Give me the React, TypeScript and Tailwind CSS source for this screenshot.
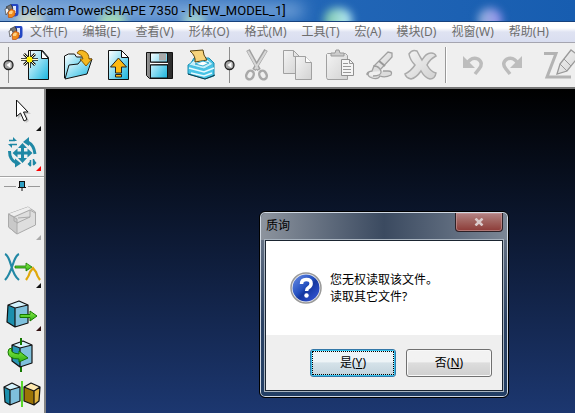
import { useState } from "react";
import type { ReactNode } from "react";

const menus = [
  { name: "文件", hotkey: "F" },
  { name: "编辑", hotkey: "E" },
  { name: "查看", hotkey: "V" },
  { name: "形体", hotkey: "O" },
  { name: "格式", hotkey: "M" },
  { name: "工具", hotkey: "T" },
  { name: "宏", hotkey: "A" },
  { name: "模块", hotkey: "D" },
  { name: "视窗", hotkey: "W" },
  { name: "帮助", hotkey: "H" },
];

// gradients shared by all the icons
function IconDefs() {
  return (
    <svg className="absolute size-0" aria-hidden="true">
      <defs>
        <linearGradient id="cyan" x1="0" y1="0" x2="1" y2="1">
          <stop offset="0" stopColor="#ffffff" />
          <stop offset="0.5" stopColor="#8adcf2" />
          <stop offset="1" stopColor="#18b4de" />
        </linearGradient>
        <linearGradient id="grey" x1="0" y1="0" x2="1" y2="1">
          <stop offset="0" stopColor="#f4f4f4" />
          <stop offset="1" stopColor="#d2d2d2" />
        </linearGradient>
        <linearGradient id="steel" x1="0" y1="0" x2="1" y2="0">
          <stop offset="0" stopColor="#9a9a9a" />
          <stop offset="0.4" stopColor="#4c4c4c" />
          <stop offset="1" stopColor="#2a2a2a" />
        </linearGradient>
        <linearGradient id="green" x1="0" y1="0" x2="0" y2="1">
          <stop offset="0" stopColor="#8af04a" />
          <stop offset="1" stopColor="#2fae12" />
        </linearGradient>
        <linearGradient id="query" x1="0" y1="0" x2="1" y2="1">
          <stop offset="0" stopColor="#6d90e6" />
          <stop offset="0.45" stopColor="#2450c0" />
          <stop offset="0.55" stopColor="#1437a0" />
          <stop offset="1" stopColor="#3c5ce0" />
        </linearGradient>
      </defs>
    </svg>
  );
}

function Logo() {
  return (
    <svg viewBox="0 0 15 15" className="size-[15px] shrink-0" aria-hidden="true">
      <path d="M7 1h6q1.500 0 1.500 2v7q0 3-3 3.500H7z" fill="#2447c4" />
      <path d="M9 3h3v7H9z" fill="#dfe8fb" />
      <path d="M2 4l5-2.500 2 4-3 2z" fill="#777" stroke="#222" strokeWidth=".6" />
      <path d="M1 6l3-1 1 3-3 4z" fill="#f5f5f5" stroke="#444" strokeWidth=".7" />
      <path d="M4 9l3.500-3L11 8v4l-3 2.500H4.500z" fill="#f08a1c" stroke="#bb4a0c" strokeWidth=".7" />
      <path d="M5 9l2-1.500 2 1-1 2.500H5z" fill="#ffd084" />
    </svg>
  );
}

function Handle() {
  return (
    <div className="flex w-4 shrink-0 items-center justify-center">
      <svg viewBox="0 0 16 36" className="h-9 w-4" aria-hidden="true">
        <path d="M8.500 0v36" stroke="#8e8e8e" />
        <circle cx="8.500" cy="18" r="4.500" fill="#a5a5a5" stroke="#222" strokeWidth="1.300" />
        <path d="M10.500 15v6l-4-3z" fill="#fff" />
      </svg>
    </div>
  );
}

function ToolButton({ label, disabled, children }: { label: string; disabled?: boolean; children: ReactNode }) {
  return (
    <button aria-label={label} disabled={disabled} className="flex w-[41px] shrink-0 items-center justify-center">
      <svg viewBox="0 0 35 35" className="size-[35px] overflow-visible" fill="none">
        {children}
      </svg>
    </button>
  );
}

function SideButton({ label, corner, disabled, children }: { label: string; corner?: string; disabled?: boolean; children: ReactNode }) {
  return (
    <button aria-label={label} disabled={disabled} className="flex h-10 w-full shrink-0 items-center">
      <svg viewBox="0 0 44 40" className="h-10 w-11 shrink-0 overflow-visible" fill="none">
        {children}
        {corner && <path d="M41 33v5h-5z" fill={corner} />}
      </svg>
    </button>
  );
}

function TitleBar() {
  return (
    <header className="relative flex h-[21px] items-center overflow-hidden bg-linear-to-r from-[#6696cf] via-[#2367b7] via-50% to-[#175db0] px-1">
      <div className="absolute inset-y-1 -left-4 w-[320px] rounded-full bg-[#a9caef]/70 blur-sm" />
      <div className="absolute top-3 left-4 h-4 w-7 rounded-full bg-[#e5e5c5]/80 blur-xs" />
      <div className="absolute top-3 left-[98px] h-5 w-7 rounded-full bg-[#b0e8b0]/80 blur-xs" />
      <div className="absolute top-3 left-[182px] h-5 w-6 rounded-full bg-[#b8e6ce]/70 blur-xs" />
      <div className="absolute top-2 left-[324px] h-6 w-7 rounded-full bg-linear-to-r from-[#79c4a6] to-[#bdeeff] blur-xs" />
      <div className="absolute top-2 left-[478px] h-6 w-6 rounded-full bg-linear-to-r from-[#8fb3d8] to-[#9b91f0] blur-xs" />
      <div className="relative flex items-center gap-0.5">
        <Logo />
        <h1 className="font-[Roboto,'Noto_Sans',sans-serif] text-[13px] leading-5 whitespace-nowrap text-black">
          Delcam PowerSHAPE 7350 - [NEW_MODEL_1]
        </h1>
      </div>
    </header>
  );
}

function MenuBar() {
  return (
    <nav className="flex h-[21px] items-center gap-[15px] overflow-hidden border-t border-[#16417c] bg-linear-to-b from-white from-30% via-[#dfe3f2] via-50% to-[#d9def0] pl-2 text-xs text-[#6d6d6d]">
      <div className="-mr-2">
        <Logo />
      </div>
      {menus.map((menu) => (
        <button key={menu.hotkey} className="whitespace-nowrap">
          {menu.name}({menu.hotkey})
        </button>
      ))}
    </nav>
  );
}

function Toolbar() {
  return (
    <div className="flex h-[47px] overflow-hidden border-t border-b-2 border-t-[#a5a5b0] border-b-[#777] bg-[#efefef]">
      <Handle />
      <ToolButton label="新建">
        <path d="M9.500 2.500h14l6 7v22h-20z" fill="url(#cyan)" stroke="#111" />
        <path d="M22.500 2.500v8h7z" fill="#fff" stroke="#111" />
        <path d="M10.500 3v17M2 11.500h17M5 6l11 11M16 6L5 17" stroke="#111" strokeWidth="2.600" />
        <path d="M10.500 3v17M2 11.500h17M5 6l11 11M16 6L5 17" stroke="#fffbd0" />
        <circle cx="10.500" cy="11.500" r="3" fill="#fff200" />
      </ToolButton>
      <ToolButton label="打开">
        <path d="M4.500 30V8l4-2h6l2 3h9v7" fill="url(#cyan)" stroke="#111" />
        <path d="M5 31l4-14 9-1 4-5h10l-5 15z" fill="url(#cyan)" stroke="#111" />
        <path d="M17 5q2-4 7-2 5 2 5 8h3l-6 7-6-7h3q0-4-6-6z" fill="#f5b820" stroke="#8c5b00" />
      </ToolButton>
      <ToolButton label="导入">
        <path d="M7.500 2.500h13l7 7v22h-20z" fill="url(#cyan)" stroke="#111" />
        <path d="M20.500 2.500v7h7z" fill="#fff" stroke="#111" />
        <path d="M17.500 10l8 9h-5v6h-6v-6h-5zM14.500 26.500h6v2.500h-6z" fill="#fdb913" stroke="#222" />
      </ToolButton>
      <ToolButton label="保存">
        <path d="M4.500 4.500h26v26h-23l-3-3z" fill="url(#steel)" stroke="#111" />
        <path d="M8.500 5h17v9h-17zM8.500 17h17v13h-17z" fill="url(#cyan)" stroke="#111" />
        <path d="M17 5.500h7v7h-7z" fill="#aaa" />
        <path d="M8 15.500h18" stroke="#fff" />
      </ToolButton>
      <ToolButton label="打印">
        <path d="M8 15l3-5 15 0 5 5v13l-9 3-17-5V17z" fill="#48c4e6" stroke="#1b8db0" />
        <path d="M6 17l5-5 13-1 6 5-9 5z" fill="#c6f0fb" stroke="#4abbdc" />
        <path d="M7 3l13-1q0 5 4 10l-12 2q1-6-5-11z" fill="#f6d37c" stroke="#57410f" />
        <path d="M12 16l8-3 6 2-6 3z" fill="#fff" stroke="#34aed2" />
        <path d="M6 20l15 4 10-4M8 25l13 3 8-3" stroke="#e7faff" strokeWidth="1.500" />
        <path d="M5 26l17 5 10-4" stroke="#123d4a" />
      </ToolButton>
      <Handle />
      <ToolButton label="剪切" disabled>
        <path d="M8 2l11 20M26 2L14 22" stroke="#a0a0a0" strokeWidth="4" />
        <path d="M8 3l10 18M26 3L15 21" stroke="#d6d6d6" strokeWidth="2" />
        <ellipse cx="10" cy="27" rx="3.500" ry="4.500" stroke="#a9a9a9" strokeWidth="2.500" transform="rotate(30 10 27)" />
        <ellipse cx="23" cy="27" rx="3.500" ry="4.500" stroke="#a9a9a9" strokeWidth="2.500" transform="rotate(-30 23 27)" />
      </ToolButton>
      <ToolButton label="复制" disabled>
        <path d="M2.500 2.500h10l6 6v17h-16z" fill="url(#grey)" stroke="#a0a0a0" />
        <path d="M12.500 2.500v6h6" stroke="#a0a0a0" />
        <path d="M14.500 8.500h10l6 6v17h-16z" fill="url(#grey)" stroke="#a0a0a0" />
        <path d="M24.500 8.500v6h6" fill="#fff" stroke="#a0a0a0" />
      </ToolButton>
      <ToolButton label="粘贴" disabled>
        <path d="M5.500 5.500h18l2 2v24h-20l-1-2v-23z" fill="url(#grey)" stroke="#a0a0a0" />
        <path d="M9 8V5h4l1-3h3l1 3h4v3z" fill="#ccc" stroke="#999" />
        <path d="M19.500 11.500h8l4 4v12h-12z" fill="#f5f5f5" stroke="#909090" />
        <path d="M27.500 11.500v4h4M21 15.500h5M21 18.500h8M21 21.500h8M21 24.500h8" stroke="#999" />
      </ToolButton>
      <ToolButton label="格式刷" disabled>
        <path d="M11 18L25 4l4 1v4L17 22z" fill="url(#grey)" stroke="#a0a0a0" strokeWidth="1.300" />
        <path d="M16 13l6 5" stroke="#999" strokeWidth="2" />
        <path d="M4 27q-1-3 5-4l2-5q5 0 7 5 1 5-8 5M6 24q-3 4 3 6 6 2 8-2 5 2 11-1 2-4-3-4h-5" fill="#ddd" stroke="#a0a0a0" strokeWidth="1.300" />
      </ToolButton>
      <ToolButton label="删除" disabled>
        <path d="M5 6q3-5 8-3 2 4 5 9 4-7 9-7 4 0 5 3-6 3-9 9 4 7 9 8-1 6-6 6-5-1-9-8-5 7-10 8-5-1-6-5 6-3 10-9-5-5-6-11z" fill="url(#grey)" stroke="#aaa" strokeWidth="1.500" />
      </ToolButton>
      <div className="w-[10px] shrink-0 py-1 pl-[3px]">
        <div className="h-full w-0.5 border-r border-white bg-[#999]" />
      </div>
      <ToolButton label="撤消" disabled>
        <path d="M11 17q5-9 12-6 6 4 1 10l-4 5" stroke="#bcbcbc" strokeWidth="3.500" />
        <path d="M8 8v12h12z" fill="#bdbdbd" />
      </ToolButton>
      <ToolButton label="重做" disabled>
        <path d="M23 17q-5-9-12-6-6 4-1 10l4 5" stroke="#bcbcbc" strokeWidth="3.500" />
        <path d="M26 8v12H14z" fill="#bdbdbd" />
      </ToolButton>
      <ToolButton label="草图" disabled>
        <path d="M7 5.500h12L10 29h24" stroke="#b3b3b3" strokeWidth="3" />
        <path d="M23 16l11-14 8 6-12 15-10 3z" fill="url(#grey)" stroke="#999" strokeWidth="1.300" />
        <path d="M23 16l7 7M27 11l7 7" stroke="#999" />
      </ToolButton>
    </div>
  );
}

function SideBar() {
  return (
    <aside className="flex w-[46px] shrink-0 flex-col border-r-2 border-[#858585] bg-[#efefef] pt-1">
      <SideButton label="选择" corner="#111">
        <path d="M18 8v18l4-4 4 8 3-2-3-7h5z" fill="#999" opacity=".4" />
        <path d="M16.500 7v16.500l4-3.500 3.500 8 3-1.500-3.500-7.500h4.500z" fill="#fff" stroke="#111" />
      </SideButton>
      <SideButton label="移动视图" corner="#f00">
        <path d="M22.500 10l4.500 5h-3v3.500h3.500v-3l5 4.500-5 4.500v-3H24V25h3l-4.500 5-4.500-5h3v-3.500h-3.500v3l-5-4.500 5-4.500v3H21V15h-3z" fill="#1f88a5" />
        <path d="M9.500 18q0 9 7 12" stroke="#1f88a5" strokeWidth="3" />
        <path d="M15 25.500v9l6-4z" fill="#1f88a5" />
        <path d="M35 21q-1-9-7-12" stroke="#1f88a5" strokeWidth="3" />
        <path d="M29 4v9l-6-4z" fill="#1f88a5" />
        <path d="M9 7.500h6M10 11.500h7M30.500 27v6M33.500 26v6" stroke="#1f88a5" strokeWidth="1.500" />
        <path d="M13 4l4 4h-4zM12 15l-4-4h4zM30.500 34v-6l-3 3zM33.500 26v7l3-3z" fill="#1f88a5" />
      </SideButton>
      <div className="mt-[3px] border-t border-b border-t-[#a5a5a5] border-b-white" />
      <div className="mb-2 flex h-4 items-center justify-center gap-0.5 px-1">
        <div className="h-px flex-1 bg-[#999]" />
        <svg viewBox="0 0 8 10" className="h-2.5 w-2" aria-hidden="true">
          <path d="M2 1h4v5H2z" fill="#2fa0c4" />
          <path d="M1 .5h6M1.500 1v5M6.500 1v5M0 6.500h8M4 7v3" stroke="#111" fill="none" />
        </svg>
        <div className="h-px flex-1 bg-[#999]" />
      </div>
      <SideButton label="实体" corner="#aaa" disabled>
        <path d="M8.500 12L28 5l7.500 5v13L17 32l-8.500-7z" fill="#dedede" stroke="#aaa" />
        <path d="M8.500 12L17 17v15l-8.500-7z" fill="#c9c9c9" stroke="#aaa" />
        <path d="M8.500 12L28 5l3 2-17 7z" fill="#eee" />
        <path d="M8.500 12l5.500 3 16-7v7l-13 6M14 15v4l4 2M18 16l12-1M30 8l5 3" stroke="#aaa" />
      </SideButton>
      <div className="pt-2">
        <SideButton label="曲线编辑" corner="#111">
          <path d="M5 4q3 1 6 11 3 11 8 15M19 4q-3 1-6 10Q9 26 5 30" stroke="#2288a5" strokeWidth="2.200" />
          <path d="M15 16h11v-3l6 4-6 4v-3H15z" fill="url(#green)" stroke="#147800" strokeWidth=".8" />
          <path d="M26 30q3-4 4-8l3-4 3 4q1 4 4 8" stroke="#e0a80b" strokeWidth="2.200" />
        </SideButton>
      </div>
      <div className="pt-[3px]">
        <SideButton label="拉伸" corner="#311">
          <path d="M8 12l7 3v19l-8-5z" fill="#1b8fad" />
          <path d="M15 15l13-3v18l-13 4z" fill="#7fc0dc" />
          <path d="M8 12l11-4 9 4-13 3z" fill="#d4f2fc" />
          <path d="M8 12l11-4 9 4v18l-13 4-8-5zM8 12l7 3 13-3M15 15v19" stroke="#111" strokeWidth="1.200" strokeLinejoin="round" />
          <path d="M20 21.500h10V18l7 5-7 5v-3.500H20z" fill="url(#green)" stroke="#147800" />
        </SideButton>
      </div>
      <SideButton label="旋转">
        <path d="M21 5v34" stroke="#147800" strokeWidth="2" />
        <path d="M12 12l8 3v19l-8-6z" fill="#2a96b4" />
        <path d="M20 15l12-3v18l-12 4z" fill="#7fc0dc" />
        <path d="M12 12l11-4 9 4-12 3z" fill="#d4f2fc" />
        <path d="M12 12l11-4 9 4v18l-12 4-8-6zM12 12l8 3 12-3M20 15v19" stroke="#111" strokeWidth="1.200" strokeLinejoin="round" />
        <path d="M21 5v7" stroke="#147800" strokeWidth="2" />
        <path d="M12 15q-3 5 7 6v-3l9 7-9 4v-3q-11 0-11-7 0-4 4-4z" fill="url(#green)" stroke="#147800" />
      </SideButton>
      <SideButton label="镜像">
        <path d="M4 14l6 3v15l-5-3z" fill="#1b8fad" />
        <path d="M10 17l10-3v14l-10 4z" fill="#7fc0dc" />
        <path d="M4 14l8-4 8 4-10 3z" fill="#d4f2fc" />
        <path d="M4 14l8-4 8 4v14l-10 4-5-3zM4 14l6 3 10-3M10 17v15" stroke="#111" strokeWidth="1.200" strokeLinejoin="round" />
        <path d="M24 14l10 4v14l-10-4z" fill="#9b7406" />
        <path d="M34 18l6-4-1 14-5 4z" fill="#e0b440" />
        <path d="M24 14l7-4 9 4-6 4z" fill="#ffe9b0" />
        <path d="M24 14l7-4 9 4-1 14-5 4-10-4zM24 14l10 4 6-4M34 18v14" stroke="#111" strokeWidth="1.200" strokeLinejoin="round" />
        <path d="M22 8v26" stroke="#59d72c" strokeWidth="2" />
      </SideButton>
    </aside>
  );
}

function QueryDialog({ onClose }: { onClose: () => void }) {
  return (
    <div
      role="dialog"
      aria-labelledby="query-title"
      className="absolute top-[122px] left-[213px] w-[250px] rounded-md border border-black bg-linear-to-b from-[#79828f] from-0% via-[#2b4263] via-60% to-[#223e64] text-xs text-black inset-ring inset-ring-[#d0d8e2]"
    >
      <div className="mx-px mt-px flex h-[27px] items-start justify-between rounded-t-md bg-linear-to-r from-[#8d949e] via-[#3b4a60] via-50% to-[#7c8796] pr-1 pl-[5px]">
        <h2 id="query-title" className="pt-[5px] leading-4">质询</h2>
        <button
          aria-label="关闭"
          onClick={onClose}
          className="flex h-[19px] w-12 items-center justify-center rounded-b border border-t-0 border-[#2d2026] bg-linear-to-b from-[#b48486] from-0% via-[#a0635f] via-45% to-[#8c3a37] inset-ring inset-ring-[#c99c9c]/60"
        >
          <svg viewBox="0 0 10 8" className="h-2 w-2.5">
            <path d="M1.500 .5l7 7M8.500 .5l-7 7" stroke="#dacaca" strokeWidth="2.500" />
          </svg>
        </button>
      </div>

      <div className="mx-[5px] mb-[6px] border border-[#1a2430] bg-white ring-1 ring-[#a9b4c0]">
        <div className="flex h-[94px] items-center gap-2 pl-6">
          <svg viewBox="0 0 32 32" className="size-8 shrink-0" aria-hidden="true">
            <circle cx="16" cy="16" r="15" fill="#f4f4f4" stroke="#999" strokeWidth="1.500" />
            <circle cx="16" cy="16" r="13.500" fill="url(#query)" />
            <path d="M11.500 12q0-4.500 4.800-4.500t4.800 4q0 2.500-2.500 4-2 1.200-2 3.500" fill="none" stroke="#fff" strokeWidth="3.500" />
            <circle cx="16.500" cy="23.500" r="2.200" fill="#fff" />
          </svg>
          <p className="leading-[17px]">
            您无权读取该文件。
            <br />
            读取其它文件?
          </p>
        </div>

        <div className="flex h-[55px] items-center justify-end gap-[10px] bg-[#efefef] pr-[10px]">
          <button
            onClick={onClose}
            className="h-7 w-[86px] rounded-[3px] border border-[#3478a8] bg-linear-to-b from-[#eef4f7] from-45% via-[#d5e2e9] via-50% to-[#c1d2dc] p-px inset-ring inset-ring-[#37c5ef]"
          >
            <span className="flex h-full items-center justify-center border border-dotted border-black">
              是(<u>Y</u>)
            </span>
          </button>
          <button
            onClick={onClose}
            className="h-7 w-[86px] rounded-[3px] border border-[#707070] bg-linear-to-b from-[#f2f2f2] from-45% via-[#dddddd] via-50% to-[#cfcfcf] inset-ring inset-ring-[#f8f8f8]"
          >
            否(<u>N</u>)
          </button>
        </div>
      </div>
    </div>
  );
}

export default function App() {
  const [queryOpen, setQueryOpen] = useState(true);

  return (
    <div className="flex min-h-screen flex-col overflow-hidden bg-[#efefef] font-['Noto_Sans','Noto_Sans_CJK_SC',sans-serif]">
      <IconDefs />
      <TitleBar />
      <MenuBar />
      <Toolbar />
      <div className="flex flex-1">
        <SideBar />
        <main className="relative flex-1 bg-linear-to-b/srgb from-black to-[#1c3770]">
          {queryOpen && <QueryDialog onClose={() => setQueryOpen(false)} />}
        </main>
      </div>
    </div>
  );
}
